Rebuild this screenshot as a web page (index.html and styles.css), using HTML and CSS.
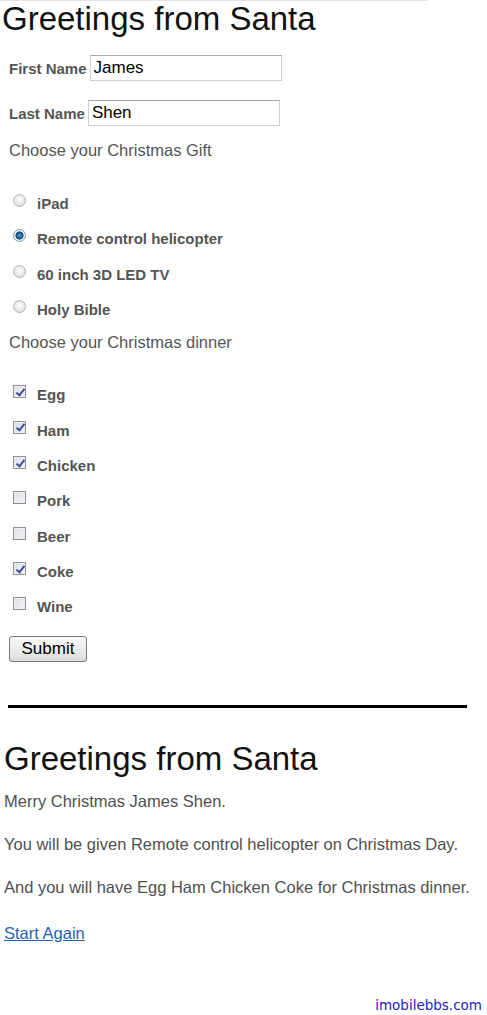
FILE: index.html
```html
<!DOCTYPE html>
<html>
<head>
<meta charset="utf-8">
<link rel="stylesheet" href="styles.css">
</head>
<body>
<div class="topline"></div>
<h1 class="title">Greetings from Santa</h1>
<form class="form">
  <div class="field field-first">
    <label class="lbl">First Name</label>
    <input class="text" type="text" value="James">
  </div>
  <div class="field field-last">
    <label class="lbl">Last Name</label>
    <input class="text" type="text" value="Shen">
  </div>
  <div class="prompt prompt-gift">Choose your Christmas Gift</div>
  <div class="options options-gift">
    <label class="opt"><input class="radio" type="radio" name="gift"><span>iPad</span></label>
    <label class="opt"><input class="radio" type="radio" name="gift" checked><span>Remote control helicopter</span></label>
    <label class="opt"><input class="radio" type="radio" name="gift"><span>60 inch 3D LED TV</span></label>
    <label class="opt"><input class="radio" type="radio" name="gift"><span>Holy Bible</span></label>
  </div>
  <div class="prompt prompt-dinner">Choose your Christmas dinner</div>
  <div class="options options-dinner">
    <label class="opt"><input class="check" type="checkbox" checked><span>Egg</span></label>
    <label class="opt"><input class="check" type="checkbox" checked><span>Ham</span></label>
    <label class="opt"><input class="check" type="checkbox" checked><span>Chicken</span></label>
    <label class="opt"><input class="check" type="checkbox"><span>Pork</span></label>
    <label class="opt"><input class="check" type="checkbox"><span>Beer</span></label>
    <label class="opt"><input class="check" type="checkbox" checked><span>Coke</span></label>
    <label class="opt"><input class="check" type="checkbox"><span>Wine</span></label>
  </div>
  <button class="submit" type="button">Submit</button>
</form>
<div class="rule"></div>
<h1 class="title title-result">Greetings from Santa</h1>
<p class="msg msg-first">Merry Christmas James Shen.</p>
<p class="msg">You will be given Remote control helicopter on Christmas Day.</p>
<p class="msg">And you will have Egg Ham Chicken Coke for Christmas dinner.</p>
<p class="msg msg-link"><a class="link" href="#">Start Again</a></p>
<div class="footer"><span class="brand">imobilebbs.com</span></div>
</body>
</html>
```
FILE: styles.css
```css
html, body {
  margin: 0;
  padding: 0;
  background: #fff;
}
body {
  width: 487px;
  min-height: 1015px;
  font-family: "Liberation Sans", Arial, sans-serif;
  color: #555;
  position: relative;
}
.topline {
  position: absolute;
  left: 0;
  top: 0;
  width: 428px;
  height: 1px;
  background: #e4e4e4;
}
.title {
  margin: 0;
  padding-left: 2px;
  font-size: 33px;
  font-weight: normal;
  line-height: 38px;
  height: 38px;
  color: #111;
}
.form {
  margin: 0;
  padding-left: 9px;
}
.field {
  display: flex;
  align-items: center;
  gap: 3px;
  height: 26px;
}
.field-first { margin-top: 17px; }
.field-last { margin-top: 19px; }
.lbl {
  font-size: 15px;
  font-weight: bold;
  color: #555;
}
.text {
  box-sizing: border-box;
  width: 192px;
  height: 26px;
  margin: 0;
  padding: 0 3px;
  border: 1px solid #d0d0d0;
  border-top-color: #a8a8a8;
  border-radius: 0;
  font-family: "Liberation Sans", Arial, sans-serif;
  font-size: 17px;
  color: #000;
  outline: none;
}
.prompt {
  height: 24px;
  line-height: 24px;
  font-size: 16.5px;
  color: #555;
}
.prompt-gift { margin-top: 12px; }
.prompt-dinner { margin-top: 3px; }
.options { display: flex; flex-direction: column; }
.options-gift { margin-top: 24px; }
.options-dinner { margin-top: 23px; }
.opt {
  display: flex;
  align-items: center;
  height: 35.33px;
  font-size: 15px;
  font-weight: bold;
  color: #555;
}
.opt span { margin-left: 11px; }
.radio, .check {
  -webkit-appearance: none;
  appearance: none;
  box-sizing: border-box;
  width: 13px;
  height: 13px;
  margin: -6px 0 0 4px;
  position: relative;
  flex: none;
}
.radio {
  border-radius: 50%;
  border: 1px solid #b4b4b4;
  background: radial-gradient(circle at 50% 40%, #fcfcfc 0%, #e6e6e6 60%, #d4d4d4 100%);
}
.radio:checked {
  border-color: #8a9ab0;
  background: radial-gradient(circle at 50% 50%, #5aa0d8 0%, #1d5d98 35%, #123e6a 48%, #e8eef4 56%, #f4f4f4 100%);
}
.check {
  border: 1px solid #8f8f9d;
  background: linear-gradient(135deg, #dcdce4 0%, #f4f4f6 100%);
  box-shadow: inset 0 0 0 1px #eeeeee;
}
.check:checked::after {
  content: "";
  position: absolute;
  left: 3.5px;
  top: 0.5px;
  width: 3px;
  height: 7px;
  border-right: 2px solid #3a4fa0;
  border-bottom: 2px solid #3a4fa0;
  transform: rotate(38deg);
}
.submit {
  display: block;
  box-sizing: border-box;
  margin-top: 11px;
  width: 78px;
  height: 26px;
  padding: 0;
  border: 1px solid #7a7a7a;
  border-radius: 3px;
  background: linear-gradient(#f8f8f8 0%, #ececec 50%, #dcdcdc 100%);
  font-family: "Liberation Sans", Arial, sans-serif;
  font-size: 17px;
  color: #000;
}
.rule {
  margin: 43px 0 0 8px;
  width: 459px;
  height: 3px;
  background: #000;
}
.title-result {
  margin-top: 32px;
  padding-left: 4px;
}
.msg {
  margin: 23px 0 0 4px;
  font-size: 16.5px;
  line-height: 20px;
  color: #505050;
}
.msg-first { margin-top: 13px; }
.msg-link { margin-top: 26px; }
.link {
  color: #1f5fb8;
  text-decoration: underline;
}
.footer {
  display: flex;
  justify-content: flex-end;
  padding-right: 5px;
  margin-top: 53px;
  line-height: 18px;
}
.brand {
  font-family: "DejaVu Sans", Verdana, sans-serif;
  font-size: 13.5px;
  color: #2020c8;
}
```
